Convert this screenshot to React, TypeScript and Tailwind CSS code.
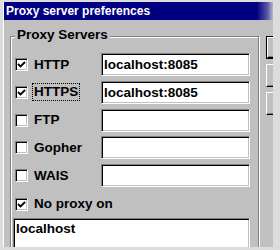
const ROWS = [
  { label: "HTTP", checked: true, value: "localhost:8085" },
  { label: "HTTPS", checked: true, value: "localhost:8085", focused: true },
  { label: "FTP", checked: false, value: "" },
  { label: "Gopher", checked: false, value: "" },
  { label: "WAIS", checked: false, value: "" },
];

function CheckBox({ checked }: { checked: boolean }) {
  return (
    <span className="w-[13px] h-[13px] shrink-0 bg-white border border-t-[#808080] border-l-[#808080] border-b-white border-r-white shadow-[inset_1px_1px_0_#000,inset_-1px_-1px_0_#c0c0c0] flex items-center justify-center">
      {checked && (
        <svg width="9" height="9" viewBox="0 0 9 9">
          <polyline points="1,4 3.5,6.5 8,2" fill="none" stroke="#000" strokeWidth="1.8" />
        </svg>
      )}
    </span>
  );
}

function Field({ value, className }: { value: string; className: string }) {
  return (
    <div
      className={`${className} bg-white border border-t-[#808080] border-l-[#808080] border-b-white border-r-white shadow-[inset_1px_1px_0_#000,inset_-1px_-1px_0_#c0c0c0] pl-[2px] text-black`}
    >
      {value}
    </div>
  );
}

function SideButton({ isDefault }: { isDefault?: boolean }) {
  return (
    <div
      className={`h-[23px] w-[80px] bg-[#c0c0c0] ${isDefault ? "border border-black" : ""}`}
    >
      <div className="h-full w-full border border-t-white border-l-white border-b-black border-r-black shadow-[inset_-1px_-1px_0_#808080]" />
    </div>
  );
}

export default function App() {
  return (
    <div className="w-[280px] h-[250px] overflow-hidden bg-[#dcdcdc] pt-[2px] pl-[3px] pb-[3px] font-['Liberation_Sans',Arial,sans-serif]">
      <div className="w-[270px] h-full flex flex-col overflow-hidden bg-[#c0c0c0] border-l border-white">
        {/* title bar */}
        <div className="h-[18px] shrink-0 pl-[2px] pt-[1px] text-[12px] leading-[16px] font-bold text-white bg-[linear-gradient(to_right,#000080_0%,#000080_94%,#5a5aa8_98%,#b8b8d0_100%)]">
          Proxy server preferences
        </div>

        <div className="flex flex-1 min-h-0">
          {/* group box */}
          <div className="ml-[6px] mt-[16px] w-[249px] h-[260px] shrink-0 border border-[#808080] shadow-[1px_1px_0_#fff,inset_1px_1px_0_#fff] flex flex-col text-[13.5px] font-bold text-black">
            <span className="-mt-[10px] ml-[4px] px-[2px] w-fit h-[16px] leading-[16px] bg-[#c0c0c0]">
              Proxy Servers
            </span>

            <div className="mt-[10px] flex flex-col gap-[4.75px]">
              {ROWS.map((r) => (
                <div key={r.label} className="h-[23px] flex items-center pl-[4px]">
                  <CheckBox checked={r.checked} />
                  <div className="w-[73px] shrink-0 flex items-center">
                    <span
                      className={`ml-[4px] h-[18px] px-[1px] leading-[16px] border ${
                        r.focused ? "border-dotted border-black" : "border-transparent"
                      }`}
                    >
                      {r.label}
                    </span>
                  </div>
                  <Field value={r.value} className="w-[149px] h-[23px] leading-[21px]" />
                </div>
              ))}
            </div>

            <div className="mt-[8px] h-[18px] flex items-center pl-[4px]">
              <CheckBox checked />
              <span className="ml-[4px] h-[18px] px-[1px] leading-[16px] border border-transparent">
                No proxy on
              </span>
            </div>

            <Field value="localhost" className="ml-[2px] mt-[5px] w-[237px] h-[60px] pt-[2px] leading-[16px]" />
          </div>

          {/* dialog buttons */}
          <div className="ml-[7px] mt-[16px] flex flex-col gap-[5px]">
            <SideButton isDefault />
            <SideButton />
            <SideButton />
          </div>
        </div>
      </div>
    </div>
  );
}
